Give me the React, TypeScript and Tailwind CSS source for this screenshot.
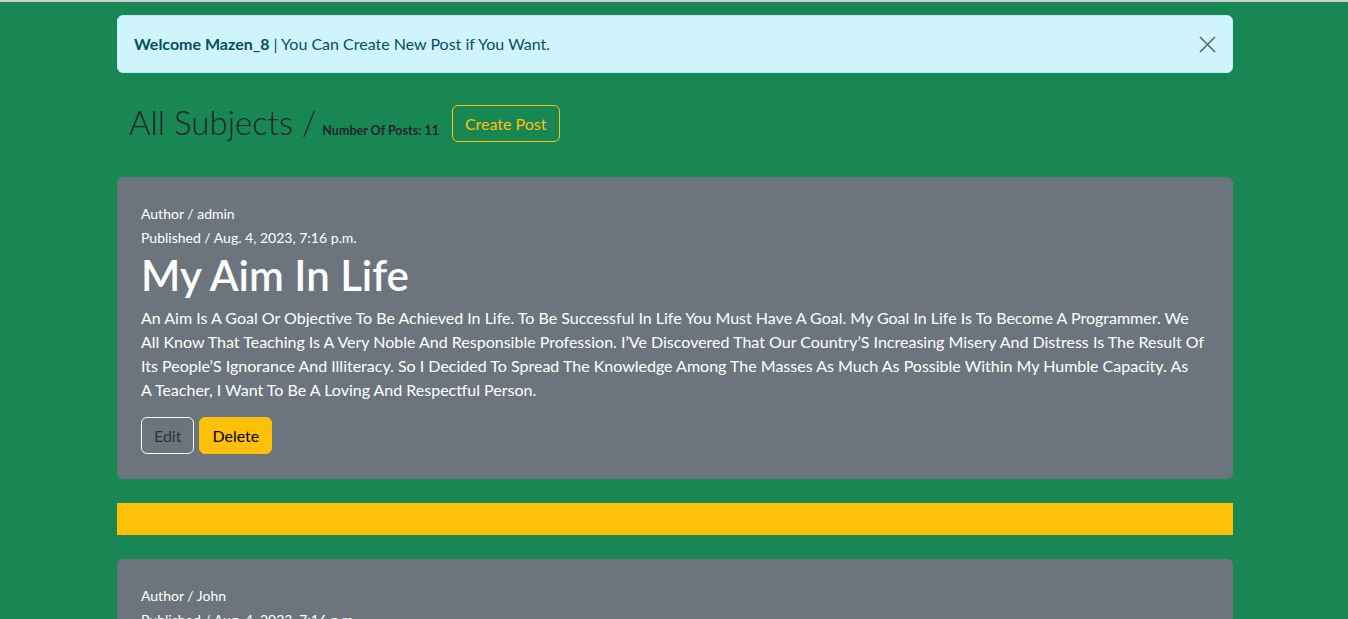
type Post = {
  author: string
  published: string
  title: string
  body: string
}

const posts: Post[] = [
  {
    author: "admin",
    published: "Aug. 4, 2023, 7:16 p.m.",
    title: "My Aim In Life",
    body:
      "An Aim Is A Goal Or Objective To Be Achieved In Life. To Be Successful In Life You Must Have A Goal. My Goal In Life Is To Become A Programmer. We All Know That Teaching Is A Very Noble And Responsible Profession. I\u2019Ve Discovered That Our Country\u2019S Increasing Misery And Distress Is The Result Of Its People\u2019S Ignorance And Illiteracy. So I Decided To Spread The Knowledge Among The Masses As Much As Possible Within My Humble Capacity. As\nA Teacher, I Want To Be A Loving And Respectful Person.",
  },
  {
    author: "John",
    published: "Aug. 4, 2023, 7:16 p.m.",
    title: "Learning To Code",
    body:
      "Programming Is A Skill That Takes Time And Patience To Learn. Every Day Is A New Chance To Build Something Useful.",
  },
]

function PostCard({ post }: { post: Post }) {
  return (
    <div className="rounded-[6px] bg-[#6c757d] px-6 pb-[25px] pt-[25px] text-white">
      <p className="text-[14px] leading-[24px]">Author / {post.author}</p>
      <p className="text-[14px] leading-[24px]">Published / {post.published}</p>
      <h2 className="-mt-[2px] mb-[4px] text-[42px] font-semibold leading-[54px]">{post.title}</h2>
      <p className="whitespace-pre-line text-[16px] leading-[24px]">{post.body}</p>
      <div className="mt-[15px] flex gap-[5px]">
        <button
          type="button"
          className="h-[37px] rounded-[6px] border border-[#f8f9fa] px-3 text-[16px] text-[#2f3337]"
        >
          Edit
        </button>
        <button
          type="button"
          className="h-[37px] rounded-[6px] border border-[#ffc107] bg-[#ffc107] px-3 text-[16px] text-black"
        >
          Delete
        </button>
      </div>
    </div>
  )
}

export default function App() {
  return (
    <div
      className="min-h-screen border-t-2 border-[#cfcfcf] bg-[#198754] pb-10"
      style={{ fontFamily: '"Segoe UI", Lato, "Noto Sans", sans-serif' }}
    >
      <div className="ml-[117px] w-[1116px] pt-[13px]">
        <div className="flex h-[58px] items-center justify-between rounded-[6px] border border-[#b6effb] bg-[#cff4fc] pl-4 pr-4 text-[16px] text-[#055160]">
          <p>
            <strong className="font-bold">Welcome Mazen_8</strong> | You Can Create New Post if You Want.
          </p>
          <button type="button" aria-label="Close" className="text-[#5d6a70]">
            <svg width="17" height="17" viewBox="0 0 17 17" fill="none" stroke="currentColor" strokeWidth="1.7">
              <path d="M1 1L16 16M16 1L1 16" />
            </svg>
          </button>
        </div>

        <div className="mt-[32px] flex h-[37px] items-center pl-3">
          <h1 className="-mt-[2px] text-[33px] font-light leading-none text-[#212529]">
            All Subjects /{" "}
            <span className="-ml-[3px] text-[12.5px] font-bold">Number Of Posts: 11</span>
          </h1>
          <button
            type="button"
            className="ml-[13px] h-[37px] rounded-[6px] border border-[#ffc107] px-3 text-[16px] text-[#ffc107]"
          >
            Create Post
          </button>
        </div>

        <div className="mt-[35px] flex flex-col gap-6">
          <PostCard post={posts[0]} />
          <div className="h-8 bg-[#ffc107]" />
          <PostCard post={posts[1]} />
        </div>
      </div>
    </div>
  )
}
